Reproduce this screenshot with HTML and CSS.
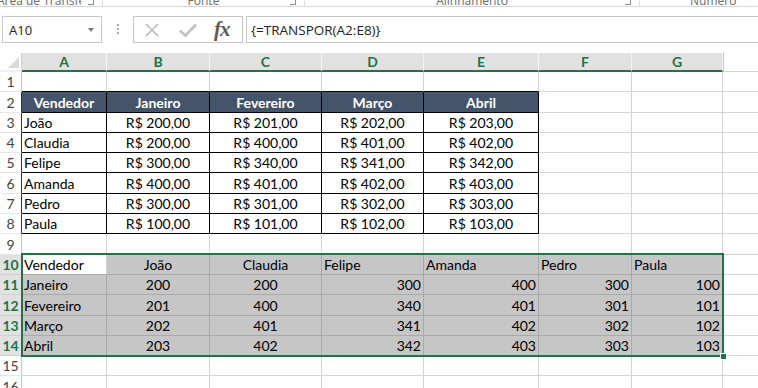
FILE: index.html
```html
<!DOCTYPE html>
<html lang="pt-BR">
<head>
    <meta charset="UTF-8">
    <title>Planilha - TRANSPOR</title>
    <link rel="stylesheet" href="styles.css">
</head>
<body>
    <!-- Ribbon group labels (cut off at top) -->
    <div class="ribbon">
        <div class="group g-clip"><span class="label">Área de Transferência</span><span class="launcher"></span></div>
        <div class="group g-font"><span class="label">Fonte</span><span class="launcher"></span></div>
        <div class="group g-align"><span class="label">Alinhamento</span><span class="launcher"></span></div>
        <div class="group g-num"><span class="label">Número</span></div>
    </div>

    <!-- Formula bar -->
    <div class="formula-bar">
        <div class="name-box">A10<span class="arrow"></span></div>
        <div class="grip">
            <svg width="4" height="12" viewBox="0 0 4 12"><rect x="1" y="0" width="2" height="2" fill="#a8a8a8"/><rect x="1" y="4" width="2" height="2" fill="#a8a8a8"/><rect x="1" y="8" width="2" height="2" fill="#a8a8a8"/></svg>
        </div>
        <div class="fx-buttons">
            <svg class="btn-x" width="16" height="16" viewBox="0 0 16 16"><path d="M2 2 L14 14 M14 2 L2 14" stroke="#b9b9b9" stroke-width="1.6" fill="none"/></svg>
            <svg class="btn-ok" width="20" height="16" viewBox="0 0 20 16"><path d="M2 8.5 L7.5 13.5 L18 2.5" stroke="#c4c4c4" stroke-width="3" fill="none"/></svg>
            <span class="fx">fx</span>
        </div>
        <div class="formula">{=TRANSPOR(A2:E8)}</div>
    </div>

    <!-- Sheet -->
    <div class="sheet">
        <table class="grid">
            <colgroup>
                <col class="w-rh"><col class="w-a"><col class="w-b"><col class="w-c"><col class="w-d"><col class="w-e"><col class="w-f"><col class="w-g"><col class="w-h">
            </colgroup>
            <thead>
                <tr class="col-head">
                    <th class="corner"><span class="tri"></span></th>
                    <th class="on">A</th><th class="on">B</th><th class="on">C</th><th class="on">D</th><th class="on">E</th><th class="on">F</th><th class="on">G</th><th class="off"></th>
                </tr>
            </thead>
            <tbody>
                <tr><th class="rh">1</th><td class="bb"></td><td class="bb"></td><td class="bb"></td><td class="bb"></td><td class="bb"></td><td></td><td></td><td></td></tr>
                <tr><th class="rh edge">2</th><td class="t head">Vendedor</td><td class="t head">Janeiro</td><td class="t head">Fevereiro</td><td class="t head">Março</td><td class="t head">Abril</td><td></td><td></td><td></td></tr>
                <tr><th class="rh edge">3</th><td class="t">João</td><td class="t c">R$ 200,00</td><td class="t c">R$ 201,00</td><td class="t c">R$ 202,00</td><td class="t c">R$ 203,00</td><td></td><td></td><td></td></tr>
                <tr><th class="rh edge">4</th><td class="t">Claudia</td><td class="t c">R$ 200,00</td><td class="t c">R$ 400,00</td><td class="t c">R$ 401,00</td><td class="t c">R$ 402,00</td><td></td><td></td><td></td></tr>
                <tr><th class="rh edge">5</th><td class="t">Felipe</td><td class="t c">R$ 300,00</td><td class="t c">R$ 340,00</td><td class="t c">R$ 341,00</td><td class="t c">R$ 342,00</td><td></td><td></td><td></td></tr>
                <tr><th class="rh edge">6</th><td class="t">Amanda</td><td class="t c">R$ 400,00</td><td class="t c">R$ 401,00</td><td class="t c">R$ 402,00</td><td class="t c">R$ 403,00</td><td></td><td></td><td></td></tr>
                <tr><th class="rh edge">7</th><td class="t">Pedro</td><td class="t c">R$ 300,00</td><td class="t c">R$ 301,00</td><td class="t c">R$ 302,00</td><td class="t c">R$ 303,00</td><td></td><td></td><td></td></tr>
                <tr><th class="rh edge">8</th><td class="t">Paula</td><td class="t c">R$ 100,00</td><td class="t c">R$ 101,00</td><td class="t c">R$ 102,00</td><td class="t c">R$ 103,00</td><td></td><td></td><td></td></tr>
                <tr><th class="rh">9</th><td></td><td></td><td></td><td></td><td></td><td></td><td></td><td></td></tr>
                <tr><th class="rh on">10</th><td class="active">Vendedor</td><td class="sel c">João</td><td class="sel c">Claudia</td><td class="sel">Felipe</td><td class="sel">Amanda</td><td class="sel">Pedro</td><td class="sel">Paula</td><td></td></tr>
                <tr><th class="rh on">11</th><td class="sel">Janeiro</td><td class="sel c">200</td><td class="sel c">200</td><td class="sel r">300</td><td class="sel r">400</td><td class="sel r">300</td><td class="sel r">100</td><td></td></tr>
                <tr><th class="rh on">12</th><td class="sel">Fevereiro</td><td class="sel c">201</td><td class="sel c">400</td><td class="sel r">340</td><td class="sel r">401</td><td class="sel r">301</td><td class="sel r">101</td><td></td></tr>
                <tr><th class="rh on">13</th><td class="sel">Março</td><td class="sel c">202</td><td class="sel c">401</td><td class="sel r">341</td><td class="sel r">402</td><td class="sel r">302</td><td class="sel r">102</td><td></td></tr>
                <tr><th class="rh on">14</th><td class="sel">Abril</td><td class="sel c">203</td><td class="sel c">402</td><td class="sel r">342</td><td class="sel r">403</td><td class="sel r">303</td><td class="sel r">103</td><td></td></tr>
                <tr><th class="rh">15</th><td></td><td></td><td></td><td></td><td></td><td></td><td></td><td></td></tr>
                <tr><th class="rh">16</th><td></td><td></td><td></td><td></td><td></td><td></td><td></td><td></td></tr>
            </tbody>
        </table>
        <!-- selection outline + fill handle -->
        <div class="selection"><span class="handle"></span></div>
    </div>
</body>
</html>
```

FILE: styles.css
```css
* {
    margin: 0;
    padding: 0;
    box-sizing: border-box;
}
body {
    background: #fff;
    font-family: 'Lato', sans-serif;
    color: #000;
    overflow: hidden;
    width: 758px;
    height: 388px;
}

/* Ribbon labels */
.ribbon {
    display: flex;
    height: 7px;
    border-bottom: 1px solid #d5d5d5;
    overflow: hidden;
}
.group {
    position: relative;
    display: flex;
    align-items: flex-end;
    justify-content: center;
    height: 6px;
    border-right: 1px solid #e1e1e1;
    font-family: 'Open Sans', sans-serif;
    font-size: 12px;
    line-height: 12px;
    color: #6a6a6a;
}
.group .label {
    white-space: nowrap;
    margin-bottom: -1px;
}
.g-clip { width: 103px; justify-content: flex-start; }
.g-clip .label { margin-left: -3px; width: 84px; overflow: hidden; }
.g-font { width: 202px; }
.g-align { width: 335px; }
.g-num { flex: 1; border-right: none; justify-content: flex-start; padding-left: 50px; }
.launcher {
    position: absolute;
    right: 8px;
    bottom: 1px;
    width: 6px;
    height: 6px;
    border-right: 1px solid #8a8a8a;
    border-bottom: 1px solid #8a8a8a;
}

/* Formula bar */
.formula-bar {
    display: flex;
    height: 27px;
    margin-top: 9px;
    font-family: 'Open Sans', sans-serif;
    font-size: 13px;
    color: #222;
}
.name-box {
    width: 100px;
    margin-left: 2px;
    border: 1px solid #c6c6c6;
    display: flex;
    align-items: center;
    justify-content: space-between;
    padding: 0 7px 0 6px;
}
.arrow {
    width: 0;
    height: 0;
    border-top: 4px solid #7a7a7a;
    border-left: 3px solid transparent;
    border-right: 3px solid transparent;
}
.grip {
    width: 31px;
    display: flex;
    align-items: center;
    justify-content: center;
}
.fx-buttons {
    width: 110px;
    border: 1px solid #c6c6c6;
    display: flex;
    align-items: center;
    padding-left: 10px;
}
.btn-ok {
    margin-left: 18px;
}
.fx {
    font-family: 'Liberation Serif', serif;
    font-style: italic;
    font-weight: bold;
    font-size: 21px;
    color: #5a5a5a;
    margin-left: 16px;
    letter-spacing: -1px;
}
.formula {
    flex: 1;
    margin-left: 3px;
    border: 1px solid #c6c6c6;
    border-right: none;
    display: flex;
    align-items: center;
    padding-left: 4px;
    font-size: 13.5px;
}

/* Sheet grid */
.sheet {
    position: relative;
    margin-top: 10px;
}
.grid {
    border-collapse: separate;
    border-spacing: 0;
    table-layout: fixed;
    width: 823px;
    font-size: 14px;
}
.w-rh { width: 22px; }
.w-a { width: 85px; }
.w-b { width: 103px; }
.w-c { width: 112px; }
.w-d { width: 102px; }
.w-e { width: 115px; }
.w-f { width: 93px; }
.w-g { width: 91px; }
.w-h { width: 100px; }

.grid tbody tr {
    height: 20.3px;
}
.grid td {
    border-right: 1px solid #d4d4d4;
    border-bottom: 1px solid #d4d4d4;
    padding: 0 2px 1px 2px;
    line-height: 17px;
    vertical-align: bottom;
    white-space: nowrap;
    overflow: hidden;
}

/* Column header */
.col-head th {
    height: 19px;
    font-size: 14px;
    font-weight: bold;
    line-height: 16px;
    vertical-align: middle;
}
.col-head .on {
    background: #e1e1e1;
    color: #217346;
    border-right: 1px solid #f3f3f3;
    border-bottom: 2px solid #217346;
}
.col-head .off {
    border-bottom: 1px solid #d4d4d4;
    border-left: 1px solid #c6c6c6;
}
.corner {
    position: relative;
    border-right: 1px solid #d4d4d4;
    border-bottom: 2px solid #f0f0f0;
}
.tri {
    position: absolute;
    right: 2px;
    bottom: 2px;
    width: 0;
    height: 0;
    border-left: 11px solid transparent;
    border-bottom: 11px solid #dadada;
}

/* Row header */
.rh {
    font-weight: normal;
    font-size: 14px;
    color: #444;
    text-align: center;
    border-right: 1px solid #c6c6c6;
    border-bottom: 1px solid #e6e6e6;
    vertical-align: bottom;
    line-height: 17px;
    padding-bottom: 1px;
}
.rh.edge {
    border-right-color: #333;
}
.rh.on {
    background: #e1e1e1;
    color: #217346;
    font-weight: bold;
    border-bottom-color: #d0d0d0;
}

/* Source table (A2:E8) */
.grid td.bb {
    border-bottom-color: #000;
}
.grid td.t {
    border-right-color: #000;
    border-bottom-color: #000;
}
.grid td.head {
    background: #44546a;
    color: #fff;
    font-weight: bold;
    text-align: center;
}
.c { text-align: center; }
.r { text-align: right; }

/* Selected range (A10:G14) */
.grid td.sel {
    background: #c6c6c6;
    border-right-color: #a9a9a9;
    border-bottom-color: #a9a9a9;
}
.grid td.active {
    background: #fff;
    border-bottom-color: #a9a9a9;
}
.selection {
    position: absolute;
    left: 21px;
    top: 200px;
    width: 703px;
    height: 104px;
    border: 2px solid #217346;
    pointer-events: none;
}
.handle {
    position: absolute;
    right: -5px;
    bottom: -5px;
    width: 7px;
    height: 7px;
    background: #217346;
    border: 1px solid #fff;
}
```
